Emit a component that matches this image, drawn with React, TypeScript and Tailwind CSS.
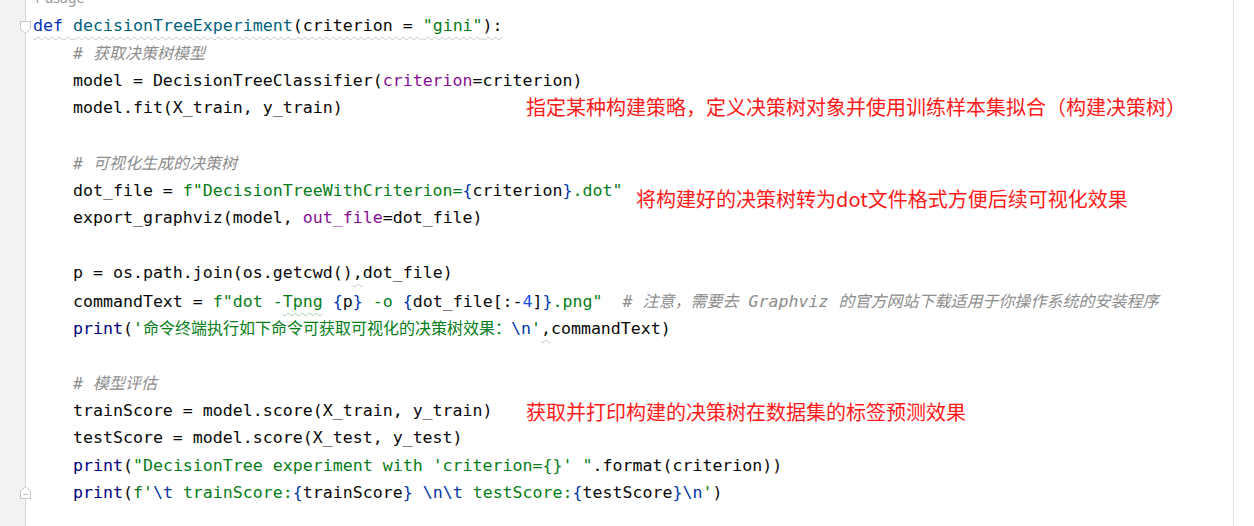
import React from "react";

const mono = { fontFamily: '"DejaVu Sans Mono", "Liberation Mono", monospace' };

const K = ({ children }: { children: React.ReactNode }) => <span className="text-[#0033b3]">{children}</span>;
const Fn = ({ children }: { children: React.ReactNode }) => <span className="text-[#00627a]">{children}</span>;
const S = ({ children }: { children: React.ReactNode }) => <span className="text-[#067d17]">{children}</span>;
const P = ({ children }: { children: React.ReactNode }) => <span className="text-[#871094]">{children}</span>;
const B = ({ children }: { children: React.ReactNode }) => <span className="text-[#0037a6]">{children}</span>;
const N = ({ children }: { children: React.ReactNode }) => <span className="text-[#1750eb]">{children}</span>;
const Bi = ({ children }: { children: React.ReactNode }) => <span className="text-[#000080]">{children}</span>;
const Cjk = ({ children }: { children: React.ReactNode }) => (
  <span className="text-[16px] [font-family:'Noto_Sans_CJK_SC',sans-serif]">{children}</span>
);
const C = ({ children }: { children: React.ReactNode }) => <span className="text-[#8c8c8c] italic">{children}</span>;

const Line = ({ children, icon }: { children?: React.ReactNode; icon?: React.ReactNode }) => (
  <div className="relative h-[27.5px] leading-[27.5px] whitespace-pre">
    {icon}
    {children}
  </div>
);

const FoldDown = (
  <svg className="absolute left-[-14px] top-[8px]" width="13" height="15" viewBox="0 0 13 15">
    <path d="M1.5 1.5 H11.5 V9 L6.5 13.5 L1.5 9 Z" fill="#ffffff" stroke="#c4c4c4" strokeWidth="1" />
  </svg>
);
const FoldUp = (
  <svg className="absolute left-[-14px] top-[6px]" width="13" height="15" viewBox="0 0 13 15">
    <path d="M1.5 13.5 H11.5 V6 L6.5 1.5 L1.5 6 Z" fill="#ffffff" stroke="#c4c4c4" strokeWidth="1" />
    <path d="M4 9.5 H9" stroke="#c4c4c4" strokeWidth="1" />
  </svg>
);

const Note = ({ children, className }: { children: React.ReactNode; className: string }) => (
  <div
    className={`absolute whitespace-nowrap text-[20px] leading-[28px] text-[#ff1a1a] [font-family:'Noto_Sans_CJK_SC',sans-serif] ${className}`}
  >
    {children}
  </div>
);

export default function App() {
  return (
    <div className="w-[1254px] h-[526px] overflow-hidden bg-white flex">
      <div className="w-[26px] shrink-0 bg-[#f2f2f2] border-r border-[#d5d5d5]" />
      <div
        className="relative w-[1208px] shrink-0 border-r border-[#e2e2e2] pl-[7px] text-[16.6px] text-[#080808]"
        style={mono}
      >
        <div className="h-[27.5px] mt-[-16px] leading-[27.5px] text-[14px] text-[#9a9a9a] [font-family:'Noto_Sans',sans-serif]">
          1 usage
        </div>
        <Line icon={FoldDown}>
          <span className="underline decoration-wavy decoration-[#c8c8c8] decoration-1 underline-offset-[5px]">
            <K>def</K> <Fn>decisionTreeExperiment</Fn>(criterion = <S>"gini"</S>):
          </span>
        </Line>
        <Line>
          {"    "}
          <C>
            # <Cjk>获取决策树模型</Cjk>
          </C>
        </Line>
        <Line>
          {"    model = DecisionTreeClassifier("}
          <P>criterion</P>
          {"=criterion)"}
        </Line>
        <Line>{"    model.fit(X_train, y_train)"}</Line>
        <Line />
        <Line>
          {"    "}
          <C>
            # <Cjk>可视化生成的决策树</Cjk>
          </C>
        </Line>
        <Line>
          {"    dot_file = "}
          <S>f"DecisionTreeWithCriterion=</S>
          <B>{"{"}</B>criterion<B>{"}"}</B>
          <S>.dot"</S>
        </Line>
        <Line>
          {"    export_graphviz(model, "}
          <P>out_file</P>
          {"=dot_file)"}
        </Line>
        <Line />
        <Line>
          {"    p = os.path.join(os.getcwd()"}
          <span className="underline decoration-wavy decoration-[#c8c8c8] decoration-1 underline-offset-[5px]">,</span>
          {"dot_file)"}
        </Line>
        <Line>
          {"    commandText = "}
          <S>f"dot -</S>
          <span className="text-[#067d17] underline decoration-wavy decoration-[#a9cfa9] decoration-1 underline-offset-[5px]">
            Tpng
          </span>
          <S> </S>
          <B>{"{"}</B>p<B>{"}"}</B>
          <S> -o </S>
          <B>{"{"}</B>dot_file[:-<N>4</N>]<B>{"}"}</B>
          <S>.png"</S>
          {"  "}
          <C>
            # <Cjk>注意，需要去</Cjk> Graphviz <Cjk>的官方网站下载适用于你操作系统的安装程序</Cjk>
          </C>
        </Line>
        <Line>
          {"    "}
          <Bi>print</Bi>(
          <S>
            '<Cjk>命令终端执行如下命令可获取可视化的决策树效果：</Cjk>
          </S>
          <B>\n</B>
          <S>'</S>
          <span className="underline decoration-wavy decoration-[#c8c8c8] decoration-1 underline-offset-[5px]">,</span>
          commandText)
        </Line>
        <Line />
        <Line>
          {"    "}
          <C>
            # <Cjk>模型评估</Cjk>
          </C>
        </Line>
        <Line>{"    trainScore = model.score(X_train, y_train)"}</Line>
        <Line>{"    testScore = model.score(X_test, y_test)"}</Line>
        <Line>
          {"    "}
          <Bi>print</Bi>(<S>"DecisionTree experiment with 'criterion={"{}"}' "</S>.format(criterion))
        </Line>
        <Line icon={FoldUp}>
          {"    "}
          <Bi>print</Bi>(<S>f'</S>
          <B>\t</B>
          <S> trainScore:</S>
          <B>{"{"}</B>trainScore<B>{"}"}</B>
          <S> </S>
          <B>\n\t</B>
          <S> testScore:</S>
          <B>{"{"}</B>testScore<B>{"}"}</B>
          <B>\n</B>
          <S>'</S>)
        </Line>

        <Note className="left-[500px] top-[93px]">
          指定某种构建策略，定义决策树对象并使用训练样本集拟合（构建决策树）
        </Note>
        <Note className="left-[610px] top-[185px]">将构建好的决策树转为dot文件格式方便后续可视化效果</Note>
        <Note className="left-[500px] top-[398px]">获取并打印构建的决策树在数据集的标签预测效果</Note>
      </div>
      <div className="flex-1 bg-white" />
    </div>
  );
}
